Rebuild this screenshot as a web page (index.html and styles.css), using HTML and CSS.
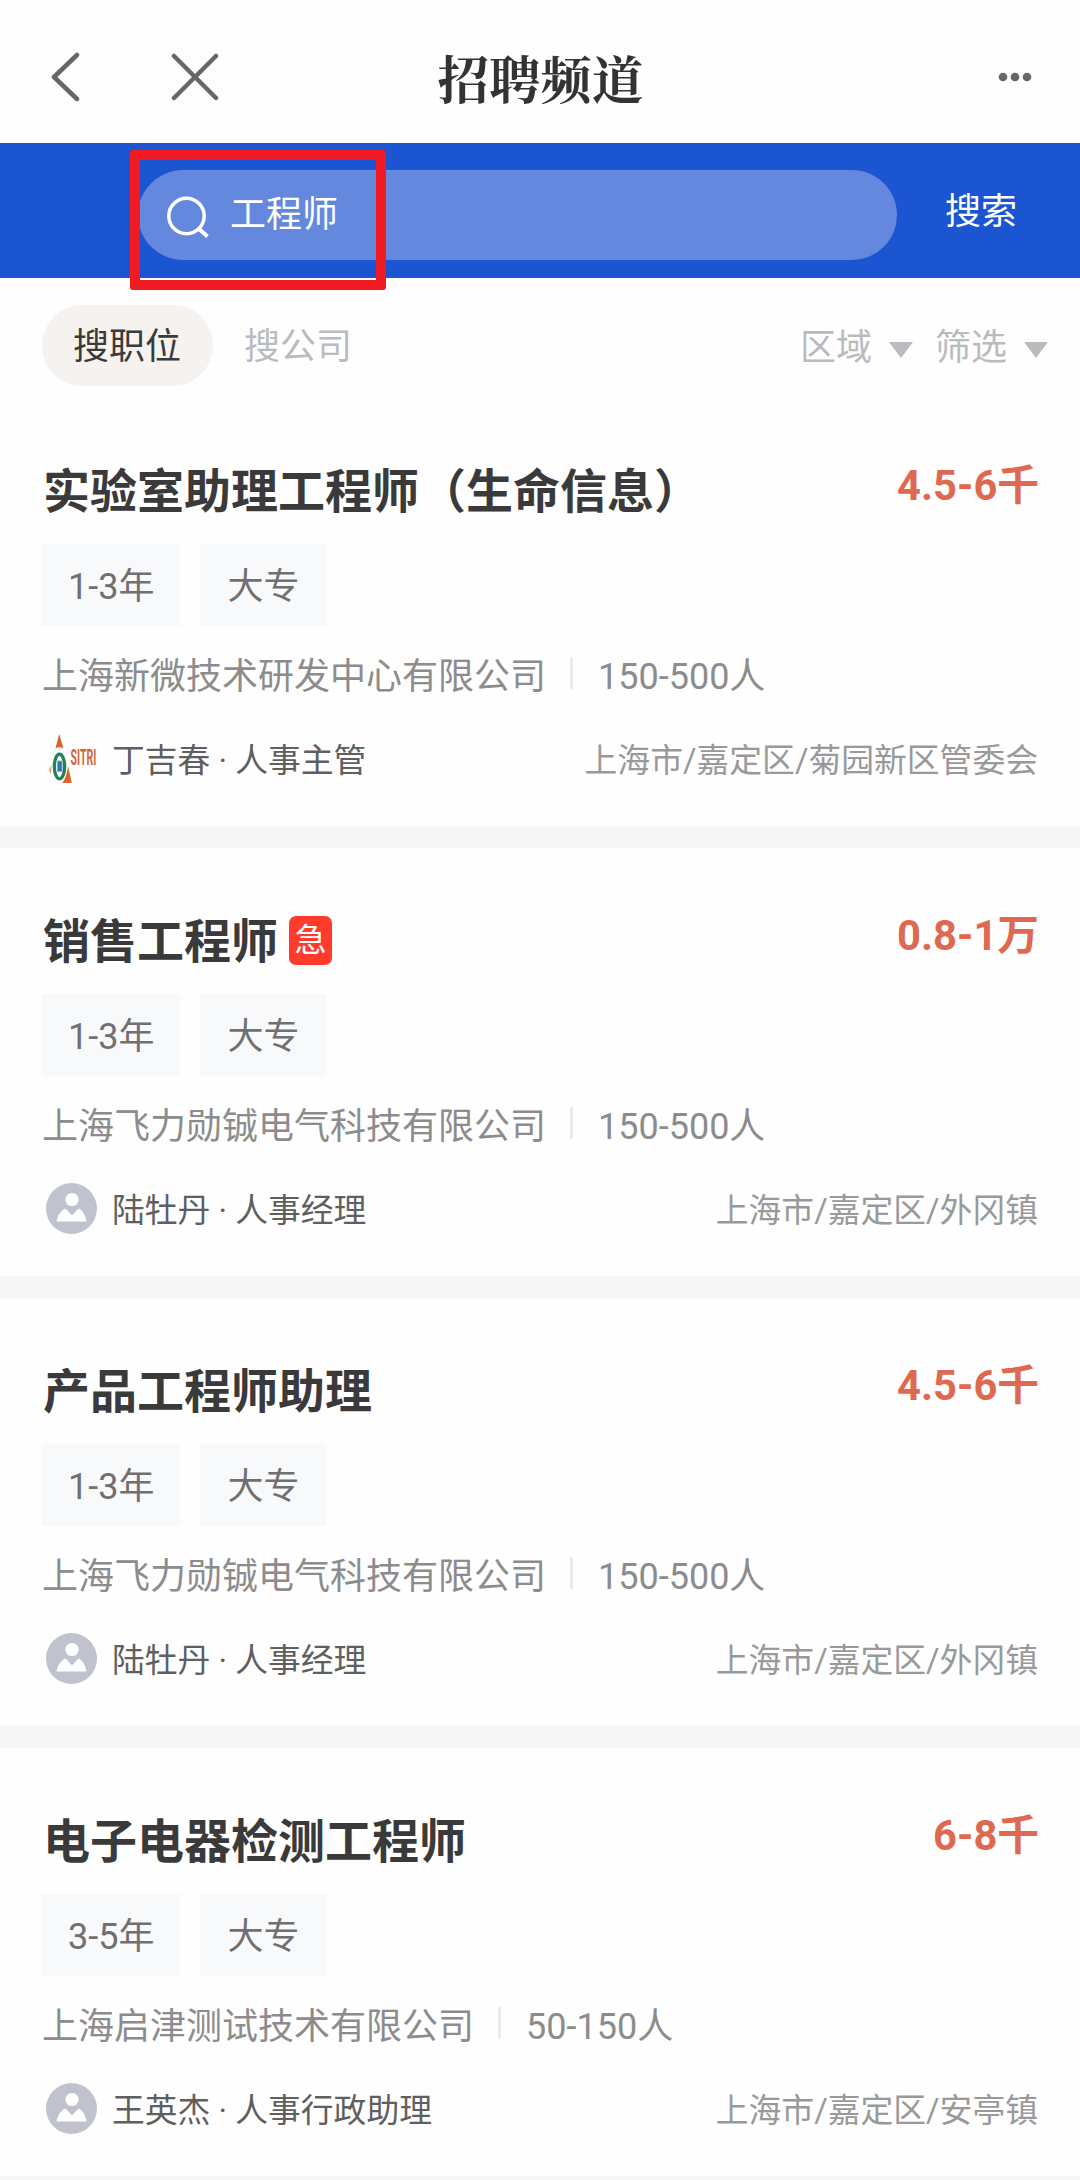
FILE: index.html
```
<!DOCTYPE html>
<html lang="zh-CN">

<head>
    <meta charset="UTF-8">
    <meta name="viewport" content="width=device-width, initial-scale=1.0">
    <title>招聘频道</title>
    <link rel="stylesheet" href="styles.css">
</head>

<body>
    <!-- shared icons -->
    <svg class="sprite" aria-hidden="true">
        <symbol id="avatar" viewBox="0 0 51 51">
            <circle cx="25.5" cy="25.5" r="25.5" fill="#c0c3ce" />
            <circle cx="26" cy="16.5" r="6.6" fill="#fff" />
            <path d="M10.500 38.500C12 31 15.500 27.500 19.500 25.500L26 32.500L32.500 25.500C36.500 27.500 39 31 40.500 38.500Z" fill="#fff" />
        </symbol>
    </svg>

    <header class="header">
        <div class="header__side">
            <svg class="header__back" viewBox="0 0 30 52" fill="none" stroke="#666" stroke-width="4.500" stroke-linecap="round" stroke-linejoin="round">
                <path d="M26 4L3 26L26 48" />
            </svg>
            <svg class="header__close" viewBox="0 0 48 48" fill="none" stroke="#666" stroke-width="4.500" stroke-linecap="round">
                <path d="M3 3L45 45M45 3L3 45" />
            </svg>
        </div>
        <h1 class="header__title">招聘频道</h1>
        <div class="header__side header__side--right">
            <svg class="header__more" viewBox="0 0 34 10" fill="#666">
                <circle cx="5" cy="5" r="4.300" />
                <circle cx="17" cy="5" r="4.300" />
                <circle cx="29" cy="5" r="4.300" />
            </svg>
        </div>
    </header>

    <div class="search">
        <div class="search__box">
            <svg class="search__icon" viewBox="0 0 42 42" fill="none" stroke="#fff" stroke-width="3.500">
                <circle cx="19.500" cy="20" r="17.700" />
                <path d="M31.500 32.500L40.500 40.500" stroke-width="4" />
            </svg>
            <span>工程师</span>
        </div>
        <span class="search__button">搜索</span>
        <div class="search__highlight"></div>
    </div>

    <nav class="filters">
        <span class="filters__tab filters__tab--active">搜职位</span>
        <span class="filters__tab">搜公司</span>
        <div class="filters__right">
            <span class="filters__select">区域</span>
            <span class="filters__select">筛选</span>
        </div>
    </nav>

    <main class="jobs">
        <article class="job">
            <div class="job__head">
                <h2 class="job__title">实验室助理工程师（生命信息）</h2>
                <span class="job__salary">4.5-6千</span>
            </div>
            <div class="job__tags">
                <span class="tag">1-3年</span>
                <span class="tag">大专</span>
            </div>
            <div class="job__company">
                <span>上海新微技术研发中心有限公司</span>
                <span class="job__size">150-500人</span>
            </div>
            <div class="job__foot">
                <svg class="job__avatar" viewBox="0 0 51 51">
                    <path d="M13.200 1L17.500 15.500Q13 13 9.400 15.500Z" fill="#d9642b" />
                    <path d="M22 33L25.800 50H16.500Q21 43 22 33Z" fill="#d9642b" />
                    <path d="M5.500 32L3 37L5 41Z" fill="#e39a66" />
                    <ellipse cx="13.500" cy="33.500" rx="5.200" ry="12.300" fill="#fff" stroke="#218253" stroke-width="3.200" />
                    <rect x="11.300" y="28" width="4.800" height="10.500" fill="#2b79ae" stroke="#85b9b9" />
                    <text transform="translate(24.500 32) scale(0.480 1)" class="logo-text">SITRI</text>
                </svg>
                <span class="job__contact">丁吉春 · 人事主管</span>
                <span class="job__address">上海市/嘉定区/菊园新区管委会</span>
            </div>
        </article>

        <article class="job">
            <div class="job__head">
                <h2 class="job__title">销售工程师</h2>
                <span class="job__urgent">急</span>
                <span class="job__salary">0.8-1万</span>
            </div>
            <div class="job__tags">
                <span class="tag">1-3年</span>
                <span class="tag">大专</span>
            </div>
            <div class="job__company">
                <span>上海飞力勋铖电气科技有限公司</span>
                <span class="job__size">150-500人</span>
            </div>
            <div class="job__foot">
                <svg class="job__avatar"><use href="#avatar" /></svg>
                <span class="job__contact">陆牡丹 · 人事经理</span>
                <span class="job__address">上海市/嘉定区/外冈镇</span>
            </div>
        </article>

        <article class="job">
            <div class="job__head">
                <h2 class="job__title">产品工程师助理</h2>
                <span class="job__salary">4.5-6千</span>
            </div>
            <div class="job__tags">
                <span class="tag">1-3年</span>
                <span class="tag">大专</span>
            </div>
            <div class="job__company">
                <span>上海飞力勋铖电气科技有限公司</span>
                <span class="job__size">150-500人</span>
            </div>
            <div class="job__foot">
                <svg class="job__avatar"><use href="#avatar" /></svg>
                <span class="job__contact">陆牡丹 · 人事经理</span>
                <span class="job__address">上海市/嘉定区/外冈镇</span>
            </div>
        </article>

        <article class="job">
            <div class="job__head">
                <h2 class="job__title">电子电器检测工程师</h2>
                <span class="job__salary">6-8千</span>
            </div>
            <div class="job__tags">
                <span class="tag">3-5年</span>
                <span class="tag">大专</span>
            </div>
            <div class="job__company">
                <span>上海启津测试技术有限公司</span>
                <span class="job__size">50-150人</span>
            </div>
            <div class="job__foot">
                <svg class="job__avatar"><use href="#avatar" /></svg>
                <span class="job__contact">王英杰 · 人事行政助理</span>
                <span class="job__address">上海市/嘉定区/安亭镇</span>
            </div>
        </article>
    </main>
</body>

</html>
```

FILE: styles.css
```
:root {
    --color-bg: #f7f7f7;
    --color-card: #fefefe;
    --color-primary: #1b55d1;
    --color-search: #6388de;
    --color-text: #3a3a3a;
    --color-muted: #8c8c8c;
    --color-light: #b9bbbf;
    --color-salary: #de6850;
    --color-urgent: #ff3b2b;
    --color-highlight: #ee1b22;
}

* {
    box-sizing: border-box;
}

body {
    margin: 0;
    height: 2180px;
    overflow: hidden;
    background-color: var(--color-bg);
    color: var(--color-text);
    font-family: Roboto, "Noto Sans CJK SC", sans-serif;
    font-size: 36px;
}

.sprite {
    display: none;
}

.header {
    display: flex;
    align-items: center;
    height: 143px;
    padding: 10px 48px 0 51px;
    background-color: var(--color-card);
}

.header__side {
    display: flex;
    flex: 1;
    align-items: center;
}

.header__side--right {
    justify-content: flex-end;
}

.header__back {
    width: 30px;
    height: 52px;
}

.header__close {
    width: 48px;
    height: 48px;
    margin-left: 90px;
}

.header__title {
    margin: 0 2px 0 0;
    font-family: "Noto Serif CJK SC", "Noto Sans CJK SC", serif;
    font-size: 51.5px;
    line-height: 60px;
    color: #333;
}

.header__more {
    width: 34px;
    height: 10px;
}

.search {
    position: relative;
    display: flex;
    height: 135px;
    padding: 27px 0 0 138px;
    background-color: var(--color-primary);
    color: #fff;
}

.search__box {
    display: flex;
    align-items: center;
    gap: 21px;
    width: 759px;
    height: 90px;
    padding-left: 29px;
    border-radius: 45px;
    background-color: var(--color-search);
}

.search__box span {
    line-height: 36px;
}

.search__icon {
    width: 42px;
    height: 42px;
    margin-top: 4px;
}

.search__button {
    margin-left: 48px;
    line-height: 84px;
}

/* red frame around the keyword, runs over the bottom edge of the bar */
.search__highlight {
    position: absolute;
    top: 7px;
    left: 130px;
    width: 256px;
    height: 140px;
    border: 10px solid var(--color-highlight);
    border-radius: 3px;
}

.filters {
    display: flex;
    align-items: center;
    height: 120px;
    padding: 14px 32px 0 42px;
    background-color: var(--color-card);
    color: var(--color-light);
}

.filters__tab {
    padding-top: 3px;
    line-height: 78px;
}

.filters__tab--active {
    margin-right: 31px;
    padding: 3px 32px 0 31px;
    border-radius: 41px;
    background-color: #f5f2ef;
    color: var(--color-text);
}

.filters__right {
    display: flex;
    gap: 22px;
    margin: -3px 0 0 auto;
}

.filters__select {
    display: flex;
    align-items: center;
}

.filters__select::after {
    content: '';
    margin: 12px 0 0 17px;
    border: 12px solid transparent;
    border-top: 16px solid var(--color-light);
    border-bottom: 0;
}

.job {
    height: 428px;
    margin-bottom: 22px;
    padding: 62px 42px 0;
    background-color: var(--color-card);
}

.job__head {
    display: flex;
    align-items: center;
    height: 60px;
}

.job__title {
    margin: 3px 0 0 1px;
    font-size: 47px;
    line-height: 60px;
}

.job__urgent {
    width: 43px;
    height: 49px;
    margin-left: 11px;
    border-radius: 7px;
    background-color: var(--color-urgent);
    color: #fff;
    font-size: 32px;
    line-height: 48px;
    text-align: center;
}

.job__salary {
    margin: 0 -1px 8px auto;
    font-size: 41.7px;
    font-weight: bold;
    line-height: 50px;
    color: var(--color-salary);
}

.job__tags {
    display: flex;
    gap: 20px;
    margin-top: 24px;
}

.tag {
    padding: 4px 27px 0;
    background-color: #f8f9fb;
    color: #707070;
    line-height: 78px;
}

.tag:first-child {
    padding: 4px 26px 0;
}

.job__company {
    display: flex;
    align-items: center;
    height: 50px;
    margin-top: 22px;
    color: var(--color-muted);
}

.job__size {
    display: flex;
    align-items: center;
}

.job__size::before {
    content: '';
    width: 3px;
    height: 32px;
    margin: 0 25px 0 24px;
    background-color: #ebebeb;
}

.job__foot {
    display: flex;
    align-items: center;
    height: 52px;
    margin-top: 34px;
    padding-left: 4px;
    font-size: 32.8px;
    line-height: 52px;
}

.job__avatar {
    width: 51px;
    height: 51px;
}

.job__contact {
    margin: 6px 0 0 15px;
    color: #5f5f5f;
}

.job__address {
    margin: 6px 0 0 auto;
    color: #999;
}

.logo-text {
    font-size: 22px;
    font-weight: bold;
    fill: #d0693a;
}
```
